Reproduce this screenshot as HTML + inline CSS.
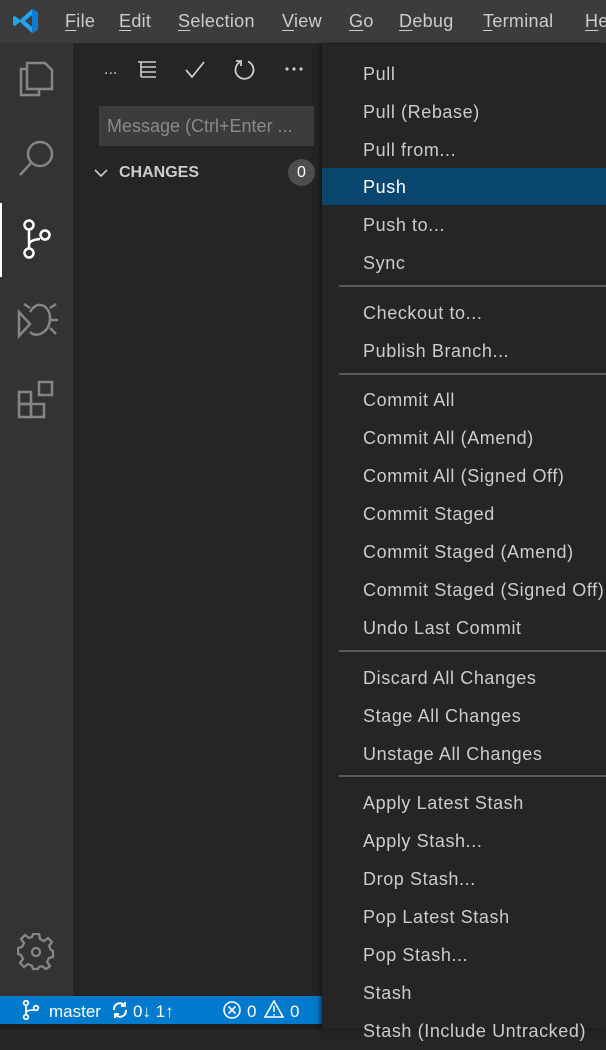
<!DOCTYPE html>
<html><head><meta charset="utf-8"><style>
*{margin:0;padding:0;box-sizing:border-box}
body{width:606px;height:1029px;overflow:hidden;background:#252526;font-family:"Liberation Sans",sans-serif;position:relative}
.a{position:absolute}
#title{left:0;top:0;width:606px;height:43px;background:#3c3c3c}
.mt{position:absolute;top:10px;font-size:18px;color:#cccccc;line-height:22px;letter-spacing:0.3px}
.mt u{text-decoration:underline;text-underline-offset:3px}
#act{left:0;top:43px;width:73px;height:953px;background:#333333}
#side{left:73px;top:43px;width:250px;height:953px;background:#252526}
#status{left:0;top:996px;width:322px;height:28px;background:#007acc;color:#fff;font-size:17px}
#menu{left:322px;top:44px;width:284px;height:985px;background:#252526;box-shadow:-2px 0 4px rgba(0,0,0,.5)}
.it{position:absolute;left:0;width:284px;height:37px;line-height:37px;padding-left:41px;font-size:18px;letter-spacing:0.6px;color:#cccccc;white-space:nowrap}
.sep{position:absolute;left:17px;width:267px;height:2px;background:#5a5a5a}
</style></head><body>
<div id="title" class="a">
<svg class="a" style="left:12px;top:7px" width="28" height="28" viewBox="0 0 28 28"><path d="M20 2 L26 5 V23 L20 26 L8 15 L3 19 L1 18 V10 L3 9 L8 13 Z M20 8 L13 14 L20 20 Z" fill="#23a3ec"/><path d="M20 2 L26 5 V23 L20 26 Z" fill="#0e7ad0"/></svg>
<span class="mt" style="left:65px"><u>F</u>ile</span>
<span class="mt" style="left:119px"><u>E</u>dit</span>
<span class="mt" style="left:178px"><u>S</u>election</span>
<span class="mt" style="left:282px"><u>V</u>iew</span>
<span class="mt" style="left:349px"><u>G</u>o</span>
<span class="mt" style="left:399px"><u>D</u>ebug</span>
<span class="mt" style="left:483px"><u>T</u>erminal</span>
<span class="mt" style="left:585px"><u>H</u>elp</span>
</div>
<div id="act" class="a">
<svg class="a" style="left:17px;top:16px" width="38" height="40" viewBox="0 0 38 40" fill="none" stroke="#858585" stroke-width="2.5"><path d="M10 10 H4 V36 H22 V30"/><path d="M10 4 H28 L35 11 V30 H10 Z"/></svg>
<svg class="a" style="left:16px;top:95px" width="40" height="40" viewBox="0 0 40 40" fill="none" stroke="#858585" stroke-width="2.5"><circle cx="24" cy="16" r="12"/><path d="M15 25 L4 37"/></svg>
<div class="a" style="left:0;top:160px;width:2px;height:74px;background:#fff"></div>
<svg class="a" style="left:20px;top:176px" width="34" height="40" viewBox="0 0 34 40" fill="none" stroke="#fff" stroke-width="2.5"><circle cx="9" cy="6" r="4.5"/><circle cx="9" cy="34" r="4.5"/><circle cx="25" cy="16" r="4.5"/><path d="M9 11 V29 M9 26 Q9 21 20 20"/></svg>
<svg class="a" style="left:16px;top:255px" width="42" height="42" viewBox="0 0 42 42" fill="none" stroke="#858585" stroke-width="2.5"><path d="M3 14 V38 L14 26 Z"/><path d="M14 14 Q20 4 28 8 Q34 12 34 20 Q34 32 24 36 Q18 38 14 34"/><path d="M8 6 L14 10 M40 6 L34 10 M34 22 H42 M34 30 L40 36"/></svg>
<svg class="a" style="left:17px;top:337px" width="40" height="40" viewBox="0 0 40 40" fill="none" stroke="#858585" stroke-width="2.5"><rect x="2" y="12" width="12" height="12"/><rect x="2" y="24" width="12" height="13"/><rect x="14" y="24" width="13" height="13"/><rect x="22" y="2" width="13" height="13"/></svg>
<svg class="a" style="left:17px;top:890px" width="38" height="38" viewBox="0 0 38 38" fill="none" stroke="#858585" stroke-width="2.3"><path d="M16 2 H22 L23 7 L27 9 L31 6 L35 10 L32 14 L34 18 L36 19 V25 L32 26 L30 30 L33 34 L29 37 L25 34 L22 35 L21 37 H16 L15 34 L11 32 L7 35 L3 31 L6 27 L4 23 L1 22 V16 L5 15 L7 11 L4 7 L8 3 L12 6 L15 5 Z" transform="translate(0,-1)"/><circle cx="19" cy="19" r="4"/></svg>
</div>
<div id="side" class="a">
<span class="a" style="left:31px;top:18px;color:#ccc;font-size:16px">...</span>
<svg class="a" style="left:64px;top:17px" width="20" height="20" viewBox="0 0 20 20" stroke="#ccc" stroke-width="1.6" fill="none"><path d="M1 2 H19 M4 7 H19 M4 12 H19 M4 17 H19 M4 2 V17"/></svg>
<svg class="a" style="left:111px;top:17px" width="22" height="20" viewBox="0 0 22 20" stroke="#ccc" stroke-width="1.8" fill="none"><path d="M2 10 L8 17 L20 2"/></svg>
<svg class="a" style="left:160px;top:15px" width="24" height="24" viewBox="0 0 24 24" stroke="#ccc" stroke-width="1.8" fill="none"><path d="M7 4 A9 9 0 1 0 15 3.5"/><path d="M3 3 H8 V8"/></svg>
<svg class="a" style="left:211px;top:23px" width="20" height="6" viewBox="0 0 20 6" fill="#ccc"><circle cx="3" cy="3" r="1.6"/><circle cx="10" cy="3" r="1.6"/><circle cx="17" cy="3" r="1.6"/></svg>
<div class="a" style="left:26px;top:63px;width:215px;height:40px;background:#3c3c3c;color:#8a8a8a;font-size:18px;line-height:40px;padding-left:8px;white-space:nowrap;overflow:hidden">Message (Ctrl+Enter ...</div>
<svg class="a" style="left:21px;top:125px" width="14" height="10" viewBox="0 0 14 10" stroke="#ccc" stroke-width="1.6" fill="none"><path d="M1 2 L7 8 L13 2"/></svg>
<span class="a" style="left:46px;top:121px;color:#ccc;font-size:16px;font-weight:bold">CHANGES</span>
<div class="a" style="left:215px;top:116px;width:27px;height:27px;border-radius:50%;background:#4d4d4d;color:#fff;font-size:16px;text-align:center;line-height:27px">0</div>
</div>
<div id="status" class="a">
<svg class="a" style="left:22px;top:4px" width="18" height="20" viewBox="0 0 18 20" stroke="#fff" stroke-width="1.8" fill="none"><circle cx="4" cy="3" r="2.3"/><circle cx="4" cy="17" r="2.3"/><circle cx="14" cy="8" r="2.3"/><path d="M4 5.5 V14.5 M4 13 Q4 10 12 10"/></svg>
<span class="a" style="left:49px;top:6px">master</span>
<svg class="a" style="left:111px;top:5px" width="18" height="18" viewBox="0 0 18 18" stroke="#fff" stroke-width="2" fill="none"><path d="M3 9 A6 6 0 0 1 14 5 M15 9 A6 6 0 0 1 4 13"/><path d="M14 1 V5 H10 M4 17 V13 H8"/></svg>
<span class="a" style="left:133px;top:6px">0↓ 1↑</span>
<svg class="a" style="left:222px;top:4px" width="20" height="20" viewBox="0 0 20 20" stroke="#fff" stroke-width="1.6" fill="none"><circle cx="10" cy="10" r="8"/><path d="M6.5 6.5 L13.5 13.5 M13.5 6.5 L6.5 13.5"/></svg>
<span class="a" style="left:247px;top:6px">0</span>
<svg class="a" style="left:263px;top:3px" width="22" height="20" viewBox="0 0 22 20" stroke="#fff" stroke-width="1.6" fill="none"><path d="M11 2 L20 18 H2 Z M11 7 V13 M11 15 V16.5"/></svg>
<span class="a" style="left:290px;top:6px">0</span>
</div>
<div class="a" style="left:0;top:1024px;width:322px;height:5px;background:#1e1e1e"></div>
<div id="menu" class="a">
<div class="it" style="top:12px">Pull</div>
<div class="it" style="top:50px">Pull (Rebase)</div>
<div class="it" style="top:88px">Pull from...</div>
<div class="it" style="top:124px;background:#094771;color:#fff;line-height:39px">Push</div>
<div class="it" style="top:163px">Push to...</div>
<div class="it" style="top:201px">Sync</div>
<div class="sep" style="top:241px"></div>
<div class="it" style="top:251px">Checkout to...</div>
<div class="it" style="top:289px">Publish Branch...</div>
<div class="sep" style="top:329px"></div>
<div class="it" style="top:338px">Commit All</div>
<div class="it" style="top:376px">Commit All (Amend)</div>
<div class="it" style="top:414px">Commit All (Signed Off)</div>
<div class="it" style="top:452px">Commit Staged</div>
<div class="it" style="top:490px">Commit Staged (Amend)</div>
<div class="it" style="top:528px">Commit Staged (Signed Off)</div>
<div class="it" style="top:566px">Undo Last Commit</div>
<div class="sep" style="top:606px"></div>
<div class="it" style="top:616px">Discard All Changes</div>
<div class="it" style="top:654px">Stage All Changes</div>
<div class="it" style="top:692px">Unstage All Changes</div>
<div class="sep" style="top:731px"></div>
<div class="it" style="top:741px">Apply Latest Stash</div>
<div class="it" style="top:779px">Apply Stash...</div>
<div class="it" style="top:817px">Drop Stash...</div>
<div class="it" style="top:855px">Pop Latest Stash</div>
<div class="it" style="top:893px">Pop Stash...</div>
<div class="it" style="top:931px">Stash</div>
<div class="it" style="top:969px">Stash (Include Untracked)</div>
</div>
</body></html>
